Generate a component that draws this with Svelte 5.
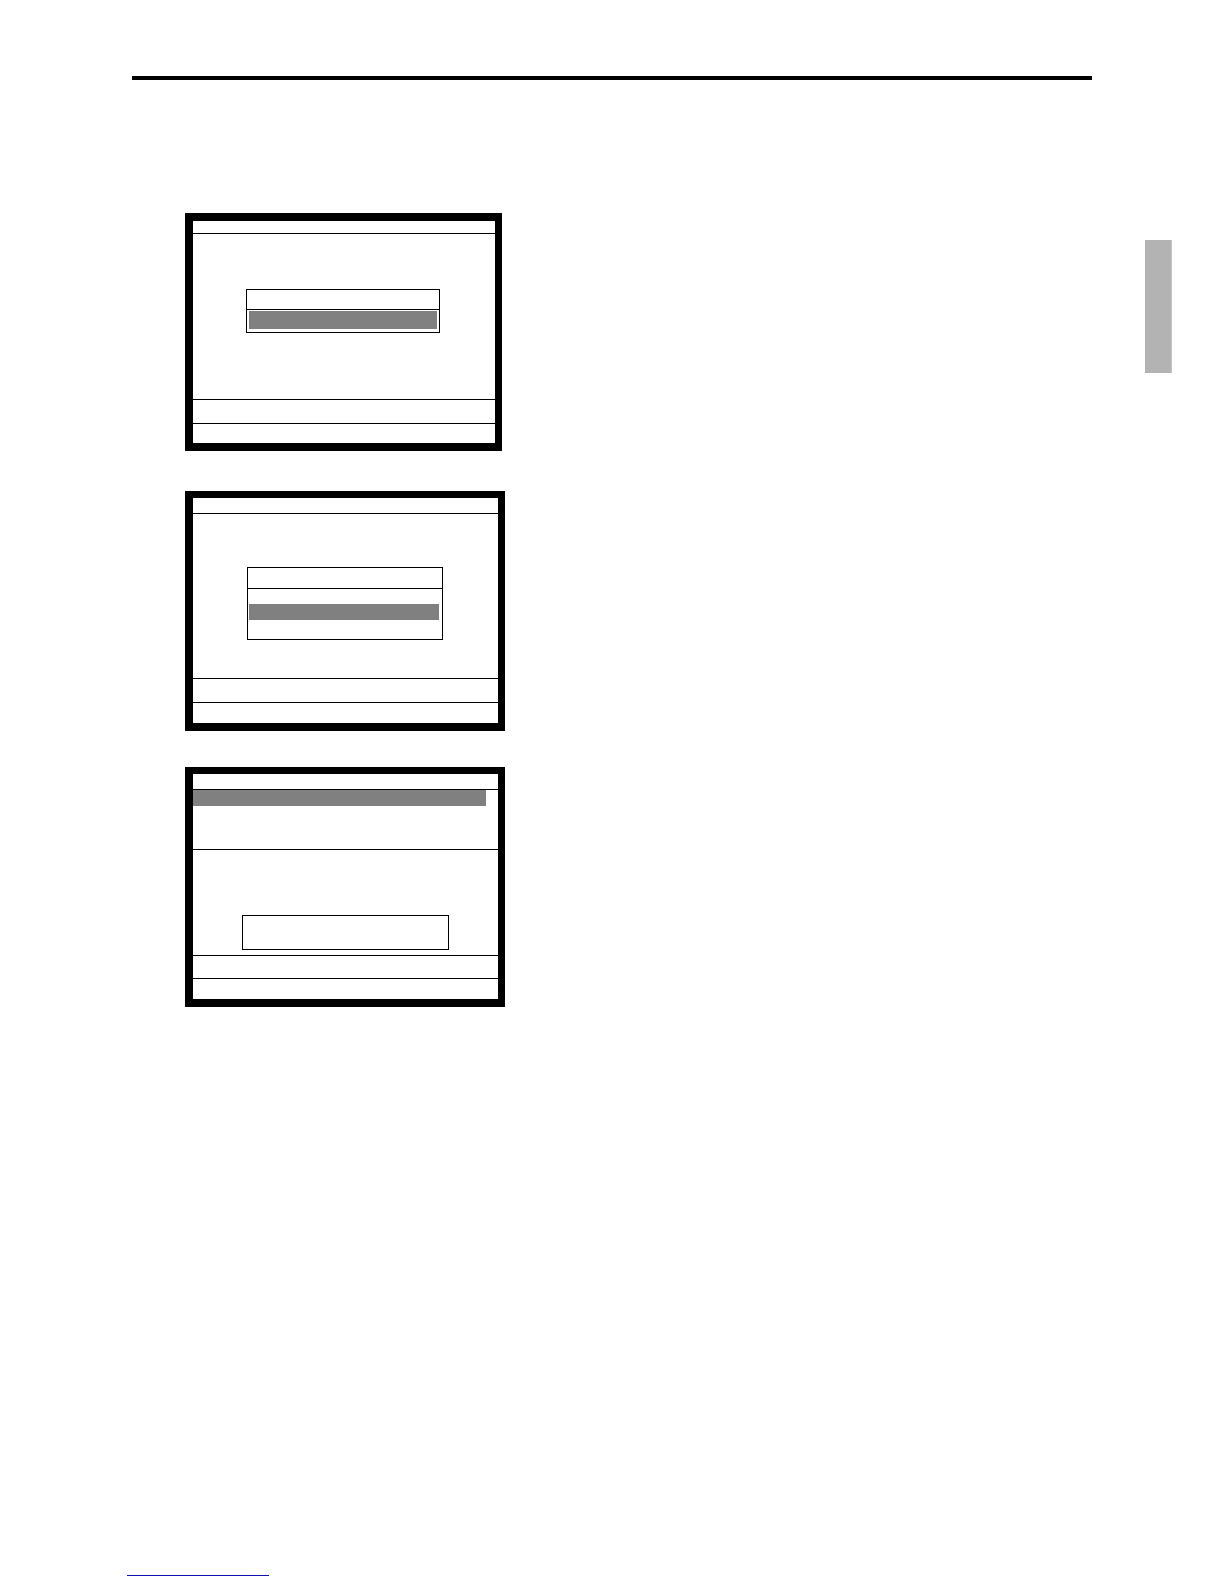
<script lang="ts">
  type Screen = {
    kind: string;
    rows: boolean;
    list: boolean;
  };

  const screens: Screen[] = [
    { kind: 'single', rows: false, list: true },
    { kind: 'choice', rows: false, list: true },
    { kind: 'message', rows: true, list: false }
  ];
</script>

<div class="page">
  <header class="page-header"></header>

  <div class="content">
    <main class="screens">
      {#each screens as screen}
        <section class="screen {screen.kind}">
          <div class="title-bar"></div>
          {#if screen.rows}
            <div class="rows">
              <div class="highlight"></div>
            </div>
          {/if}
          <div class="body">
            <div class="dialog">
              {#if screen.list}
                <div class="dialog-title"></div>
                <div class="highlight"></div>
              {/if}
            </div>
          </div>
          <div class="status"></div>
          <div class="keys"></div>
        </section>
      {/each}
    </main>
    <aside class="chapter-tab"></aside>
  </div>

  <footer class="page-footer">
    <a href="#top" aria-label="Back to top"></a>
  </footer>
</div>

<style>
  :global(body) {
    background: #fff;
    font-family: "Liberation Sans", Arial, sans-serif;
  }

  .page,
  .page * {
    box-sizing: border-box;
  }

  .page {
    display: flex;
    flex-direction: column;
    min-height: 100vh;
    padding-top: 76px;
  }

  .page-header {
    margin: 0 132px;
    border-top: 4px solid #000;
  }

  .content {
    display: flex;
    justify-content: space-between;
    align-items: flex-start;
    padding: 133px 52px 40px 185px;
  }

  .screens {
    display: flex;
    flex-direction: column;
  }

  .screen {
    display: flex;
    flex-direction: column;
    width: 320px;
    height: 240px;
    border: solid #000;
    border-width: 7px 7px 8px 8px;
  }

  .title-bar {
    height: 16px;
    border-bottom: 1px solid #000;
  }

  .body {
    flex: 1;
    padding: 53px 55px 0 54px;
  }

  .dialog {
    border: 1px solid #000;
  }

  .dialog-title {
    height: 21px;
    border-bottom: 1px solid #000;
  }

  .highlight {
    height: 16px;
    background: #808080;
  }

  .status {
    height: 24px;
    border-top: 1px solid #000;
  }

  .keys {
    height: 21px;
    border-top: 1px solid #000;
  }

  .single {
    width: 317px;
    height: 238px;
    border-top-width: 8px;
    margin-bottom: 40px;
  }

  .single .title-bar {
    height: 13px;
  }

  .single .body {
    padding: 55px 55px 0 53px;
  }

  .single .dialog-title {
    height: 20px;
  }

  .single .highlight {
    height: 18px;
    margin: 1px 2px 3px;
  }

  .single .keys {
    height: 20px;
  }

  .choice {
    margin-bottom: 36px;
  }

  .choice .highlight {
    margin: 15px 3px 19px 1px;
  }

  .message .rows {
    height: 60px;
    padding-right: 12px;
    border-bottom: 1px solid #000;
  }

  .message .body {
    padding: 65px 49px 0;
  }

  .message .dialog {
    height: 35px;
  }

  .message .status {
    height: 23px;
  }

  .chapter-tab {
    width: 27px;
    height: 133px;
    margin-top: 27px;
    background: #b3b3b3;
    border-right: 1px solid #c4c4c4;
  }

  .page-footer {
    margin-top: auto;
    padding: 0 127px 8px;
  }

  .page-footer a {
    display: block;
    width: 142px;
    height: 16px;
    border-bottom: 1px solid #1010b0;
  }
</style>
